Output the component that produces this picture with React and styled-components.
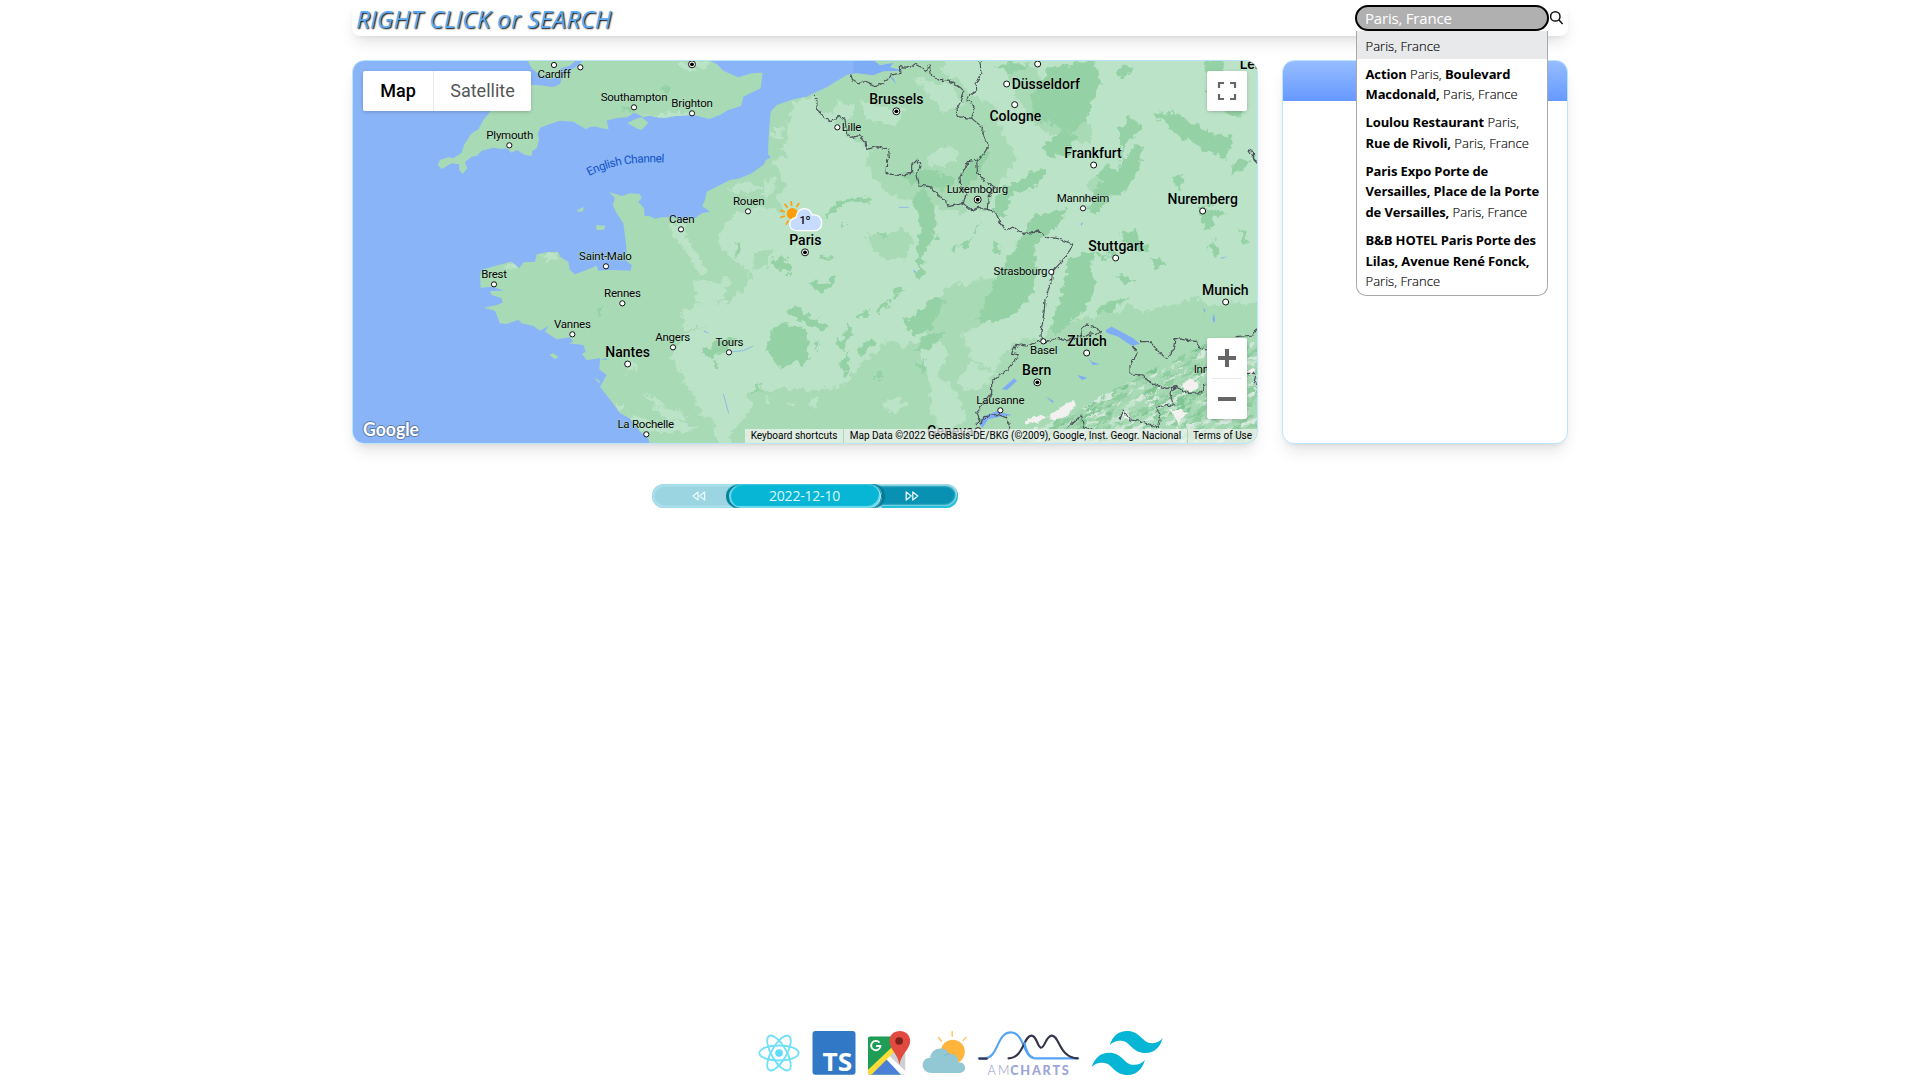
import React from 'react';
import styled, { createGlobalStyle, css } from 'styled-components';

const GlobalStyle = createGlobalStyle`
  *, *::before, *::after { box-sizing: border-box; }
  body { margin: 0; background: #fff; font-family: 'Open Sans', 'Noto Sans', sans-serif; }
`;

/* ---------- layout ---------- */

const Page = styled.div`
  min-height: 100vh;
  display: flex;
  flex-direction: column;
  align-items: center;
  overflow: hidden;
`;

const Header = styled.header`
  width: 1216px;
  height: 36px;
  display: flex;
  align-items: flex-start;
  justify-content: space-between;
  padding: 0 4px 0 4px;
  border-radius: 0 0 8px 8px;
  background: #fff;
  box-shadow: 0 10px 15px -3px rgba(0, 0, 0, 0.1), 0 4px 6px -4px rgba(0, 0, 0, 0.1);
`;

const Title = styled.h1`
  margin: 0;
  font-size: 24.5px;
  line-height: 38px;
  font-weight: 400;
  font-style: italic;
  letter-spacing: 0.1px;
  white-space: nowrap;
  color: #5aa9f5;
  text-shadow: 1px 1px 1.5px #000;
`;

const Search = styled.div`
  position: relative;
  z-index: 5;
  display: flex;
  align-items: flex-start;
  padding-top: 5px;
`;

const Field = styled.input`
  width: 194px;
  height: 26px;
  padding: 0 8px;
  border: 2px solid #000;
  border-radius: 13px;
  outline: none;
  background: #b0b0b0;
  color: #fff;
  font-family: inherit;
  font-size: 15px;
  letter-spacing: -0.2px;
`;

const SearchIcon = styled.svg`
  width: 15px;
  height: 15px;
  margin-top: 5px;
`;

const Suggestions = styled.ul`
  position: absolute;
  top: 31px;
  left: 1px;
  width: 192px;
  margin: 0;
  padding: 0 0 1px;
  list-style: none;
  overflow: hidden;
  background: #fff;
  border: 1px solid #aaa;
  border-top: 0;
  border-radius: 0 0 10px 10px;
`;

const Suggestion = styled.li`
  padding: 4.75px 0 2.25px 8.5px;
  font-size: 13px;
  font-weight: 300;
  line-height: 20.75px;
  letter-spacing: 0.03px;
  white-space: nowrap;
  color: #000;
  -webkit-text-stroke: 0.15px #000;
  background: ${(p) => (p.$active ? '#e8e9eb' : 'transparent')};
`;

const Strong = styled.b`
  font-weight: 700;
  letter-spacing: -0.12px;
  -webkit-text-stroke: 0;
`;

const Columns = styled.main`
  width: 1216px;
  display: flex;
  gap: 24px;
  margin-top: 24px;
`;

const cardShadow = css`
  box-shadow: 0 10px 15px -3px rgba(0, 0, 0, 0.1), 0 4px 6px -4px rgba(0, 0, 0, 0.1);
`;

const MapCard = styled.section`
  position: relative;
  width: 906px;
  height: 384px;
  border: 1px solid #bae6fd;
  border-radius: 12px;
  overflow: hidden;
  font-family: Roboto, sans-serif;
  ${cardShadow}
`;

const MapDrawing = styled.svg`
  display: block;
  width: 100%;
  height: 100%;
`;

const Label = styled.text`
  font-family: Roboto, sans-serif;
  font-size: ${(p) => (p.$big ? 42 : 34.5)}px;
  font-weight: ${(p) => (p.$big ? 500 : 400)};
  letter-spacing: ${(p) => (p.$big ? 0 : -0.7)}px;
  fill: #000;
  stroke: #c5ead0;
  stroke-width: 2px;
  paint-order: stroke;
`;

const SeaLabel = styled.text`
  font-family: Roboto, sans-serif;
  font-size: 35px;
  fill: #1152c5;
`;

const MapTypes = styled.div`
  position: absolute;
  top: 10px;
  left: 10px;
  display: flex;
  height: 40px;
  background: #fff;
  border-radius: 2px;
  box-shadow: 0 1px 4px -1px rgba(0, 0, 0, 0.3);
`;

const MapType = styled.button`
  width: ${(p) => p.$width}px;
  padding: 0 0 1px;
  border: 0;
  background: none;
  font-family: inherit;
  font-size: 18px;
  font-weight: ${(p) => (p.$active ? 500 : 400)};
  color: ${(p) => (p.$active ? '#000' : '#565656')};
  & + & { border-left: 1px solid #e9e9e9; }
`;

const Control = styled.div`
  position: absolute;
  right: 10px;
  ${(p) => (p.$top ? 'top: 10px;' : 'bottom: 24px;')}
  width: 40px;
  height: ${(p) => (p.$top ? 40 : 81)}px;
  background: #fff;
  border-radius: 2px;
  box-shadow: 0 1px 4px -1px rgba(0, 0, 0, 0.3);
`;

const ControlIcon = styled.svg`
  display: block;
  width: 100%;
  height: 100%;
`;

const GoogleMark = styled.svg`
  position: absolute;
  left: 8px;
  bottom: 0;
  width: 64px;
  height: 26px;
`;

const Legal = styled.div`
  position: absolute;
  right: 0;
  bottom: 0;
  display: flex;
  height: 14px;
`;

const LegalItem = styled.span`
  width: ${(p) => p.$width}px;
  text-align: center;
  font-size: 10px;
  line-height: 14px;
  white-space: nowrap;
  color: #000;
  background: rgba(245, 245, 245, 0.7);
  & + & { border-left: 1px solid #a8dab5; }
`;

const SidePanel = styled.aside`
  width: 286px;
  height: 384px;
  border: 1px solid #bae6fd;
  border-radius: 12px;
  overflow: hidden;
  background: #fff;
  ${cardShadow}
`;

const SidePanelHead = styled.div`
  height: 40px;
  background: linear-gradient(#96bdff, #6699ff);
`;

/* ---------- date switch ---------- */

const DateRow = styled.div`
  width: 1216px;
  display: flex;
  margin-top: 40px;
`;

const DateColumn = styled.div`
  width: 906px;
  display: flex;
  justify-content: center;
`;

const DateBar = styled.div`
  display: flex;
  width: 306px;
  height: 24px;
  border-radius: 12px;
  overflow: hidden;
  background: linear-gradient(90deg, #9bd5e2 0 150px, #0891b2 150px);
  box-shadow: inset 0 0 0 1px #9fdde9, inset 0 0 2px 2px #b4e4ed;
`;

const Step = styled.button`
  position: relative;
  display: flex;
  align-items: center;
  width: ${(p) => (p.$next ? 76 : 74)}px;
  height: 24px;
  padding: 0 0 0 ${(p) => (p.$next ? 22.5 : 40)}px;
  border: 0;
  border-radius: ${(p) => (p.$next ? '0 12px 12px 0' : '12px 0 0 12px')};
  background: none;
  ${(p) => p.$next && 'box-shadow: inset -1px -2px 0 #22c0da, inset -2px -3px 2px #8bdcea;'}
`;

const StepIcon = styled.svg`
  width: 14px;
  height: 10px;
`;

const Current = styled.div`
  width: 156px;
  height: 24px;
  border-radius: 12px;
  background: #06b6d4;
  border-top: 1px solid #3cc5dc;
  box-shadow: inset 3px 0 0 #0a7f99, inset -1px 0 0 #0e7f9a, inset -2px 0 0 #a9ecf6,
    inset 5px 0 1px #74dcec, inset -3px -2px 1px #74dcec, 3px 0 1px #0b7792;
  color: #dff7fb;
  font-size: 14px;
  line-height: 22px;
  letter-spacing: -0.2px;
  padding-left: 1px;
  text-align: center;
`;

/* ---------- footer ---------- */

const Footer = styled.footer`
  display: flex;
  gap: 12px;
  margin-top: auto;
  padding: 0 0 5px 0;
`;

const Logo = styled.svg`
  width: ${(p) => p.$width}px;
  height: 44px;
  overflow: visible;
`;

const LogoText = styled.text`
  font-family: ${(p) => p.$font || 'Lato, sans-serif'};
  font-weight: ${(p) => p.$weight || 700};
`;

/* ---------- map data (three units per pixel) ---------- */

const BRITAIN =
  'M1105 180 L1130 192 1150 212 1195 232 1235 220 1268 218 1262 265 1240 275 1210 290 1203 318 1165 330 1140 345 1108 357 1060 345 1010 348 965 355 930 347 910 352 892 342 882 338 862 352 830 354 800 362 806 388 785 385 770 380 750 380 738 388 700 365 660 362 630 372 600 383 594 400 597 420 590 445 577 452 575 468 555 465 530 450 515 458 500 445 485 447 460 443 425 452 410 468 395 470 375 487 382 505 368 522 358 510 357 493 335 490 305 507 293 495 300 480 325 472 340 475 365 458 372 435 395 400 415 388 430 360 450 335 470 300 573 290 573 255 600 256 640 261 660 252 668 225 690 212 712 198 730 180 Z';
const WALES = 'M562 180 L575 205 600 225 630 238 655 230 662 205 690 197 708 180 Z';
const WIGHT = 'M862 370 L885 358 905 352 925 368 905 390 890 385 Z';
const CONTINENT =
  'M2760 170 L1540 170 1555 200 1590 214 1535 222 1520 225 1460 262 1420 280 1400 290 1360 298 1310 315 1292 335 1288 380 1285 430 1284 462 1292 472 1278 480 1270 495 1235 520 1200 535 1170 540 1130 560 1100 575 1095 600 1086 618 1110 635 1085 640 1065 655 1024 665 1000 652 965 652 945 656 928 648 914 648 912 625 895 605 905 595 900 582 870 580 845 588 808 576 825 595 818 615 830 640 850 670 858 730 860 755 850 770 862 785 875 795 872 812 820 810 800 810 775 812 770 797 745 808 705 823 690 810 685 785 660 770 655 755 620 757 590 763 585 785 550 787 538 805 515 785 475 795 425 810 420 825 422 863 460 860 490 872 450 873 455 885 485 895 488 908 470 915 432 923 465 932 480 970 500 972 535 960 545 970 580 978 600 992 625 978 615 995 650 1018 690 1012 700 1025 685 1030 730 1035 737 1055 726 1062 740 1080 780 1075 778 1108 800 1125 780 1160 815 1205 840 1240 870 1255 900 1295 925 1315 930 1340 2760 1340 Z';
const LIGHTLAND =
  'M1365 305 L1425 290 1440 330 1480 345 1520 400 1560 430 1600 445 1575 490 1610 550 1660 590 1720 600 1800 620 1870 645 1885 580 1950 500 1960 440 1930 390 1970 350 1900 290 1850 240 1800 210 1830 170 2770 170 2770 990 2700 900 2600 925 2510 910 2430 930 2380 960 2300 930 2230 985 2130 980 2130 1020 2060 1010 2000 1050 1960 1110 1900 1080 1860 1000 1900 900 1850 840 1790 900 1750 960 1760 1010 1690 1040 1640 1020 1580 1080 1530 1130 1520 1155 1400 1170 1260 1165 1220 1180 1240 1220 1180 1290 1170 1340 1130 1340 1120 1260 1080 1240 1070 1200 1030 1140 1010 1090 990 1070 1040 1000 1100 980 1130 920 1200 880 1240 830 1180 780 1130 720 1150 680 1190 640 1260 620 1335 640 1310 590 1340 560 1320 520 1300 480 1350 460 1340 390 Z';
const LIGHTS = [
  'M1300 385 l30 0 -10 30 -22 -5z', 'M1345 360 l50 15 -10 25 40 20 -30 15 -40 -30z', 'M1330 430 l80 30 -40 15 -50 -20z',
  'M1270 545 l40 -15 -5 30 -20 40 -20 -20z', 'M1160 570 l50 -25 60 20 -50 15z', 'M985 670 l40 0 30 70 50 80 -30 0 -40 -70 -40 -50z',
  'M1060 840 l70 10 40 -20 -20 70 -80 10z', 'M1020 940 l80 -40 100 30 -40 40 -120 20z', 'M910 1180 l40 10 25 30 -30 -5z', 'M930 1215 l80 15 40 25 -60 5z',
  'M820 1210 l30 10 -10 20z', 'M840 1255 l60 -5 50 20 80 -10 40 30 -50 5 -60 5 -60 -20z', 'M600 765 l50 -8 8 18 -40 5z', 'M490 795 l44 -12 2 25 -20 5z', 'M850 1090 l30 -10 20 40 -20 -20 -20 20z',
  'M1560 300 l60 20 80 0 -30 60 -90 -20z', 'M1490 300 l60 20 -20 40 -50 -10z', 'M1720 230 l120 30 30 60 -60 20 -50 -60z', 'M1010 195 l80 -10 30 10 -70 15z', 'M900 345 l170 -10 0 10 -100 10z',
  'M1760 470 l50 -30 50 10 -20 40 -60 10z', 'M1620 1210 l60 -20 20 30 -50 20z', 'M1270 1190 l30 10 -15 20z M1410 1190 l20 10 -10 30z M1330 1205 l40 0 -10 15z',
  'M1740 1060 l60 -40 30 40 -40 60 60 60 30 80 -70 40 -40 -60 0 -100z', 'M1890 1090 l80 30 -60 60 -60 -30z',
];
const DARKS = [
  'M1278 1030 l40 -62 60 12 28 20 0 70 -12 30 -20 -14 -52 14 -38 -40z', 'M1335 930 l40 -12 30 30 60 30 -10 15 -60 -20z', 'M1300 775 l25 -10 28 30 0 30 -20 -10 -30 -20z',
  'M1395 845 l70 0 15 -22 10 10 -40 50z', 'M1440 770 h40 l-10 12 -25 -2z', 'M1455 650 l30 -40 60 -20 50 5 -10 20 -50 -10 -30 15 -30 20 -10 22z', 'M1185 735 l10 -10 8 20 -15 22z',
  'M1085 1065 l40 -40 60 -15 -20 40 -50 20z', 'M1120 1085 l20 5 -10 12z', 'M1555 945 l40 -18 -8 15 -30 10z', 'M1605 930 l40 -30 10 10 -40 30z', 'M1655 870 l30 -10 10 12 -30 12z',
  'M1610 700 l30 0 10 10 -30 5z', 'M1500 660 l15 10 -10 18z', 'M1700 985 l50 -60 50 0 -20 55 -60 30z', 'M1730 1050 l30 -50 60 0 -60 50z', 'M1550 1050 l40 -35 20 10 -50 45z',
  'M1510 1010 l18 -40 10 20 -30 60 -20 -10z', 'M1500 1100 l25 -50 5 50 -10 30z', 'M1600 1140 l20 -30 10 30z', 'M1730 1100 l30 -30 -10 50z',
  'M1750 560 l40 70 -10 80 -40 60 -20 -10 25 -70 -30 -90z', 'M1725 780 l20 -10 10 20 -20 10z', 'M1725 820 l10 -30 20 30 -20 20z', 'M1230 1175 l25 -18 20 20z', 'M770 930 l15 -10 0 15 -12 10z',
  'M960 270 l20 -18 15 15 -10 20z', 'M835 325 l60 -8 -20 25z', 'M1680 520 l90 -10 80 30 -30 30 -90 -10z', 'M1860 540 l50 -70 40 -20 -30 70 -50 60z',
  'M2080 265 l50 -60 130 -25 20 60 -40 120 -50 40 -60 -30 -60 -20z', 'M1960 200 l60 -20 50 20 -50 20z', 'M2110 440 l60 -50 40 20 -30 60 -60 -5z', 'M1990 560 l50 -15 60 -45 20 15 -40 50 -60 15 -50 50z', 'M1970 590 l50 -10 -30 70 -30 -10z',
  'M2340 380 l30 -30 40 30 -60 60 -10 50z', 'M2350 480 l40 -50 20 10 -10 50 -35 80 -40 20 -20 -30z', 'M2270 520 l30 -30 20 20 -30 40z',
  'M2440 340 l60 0 120 60 60 10 -20 70 -80 -40 -60 -30z', 'M2590 180 h60 l10 60 -20 40 -30 -30z', 'M2600 270 l30 0 0 40 -20 10z', 'M2330 210 l30 -20 20 20 -40 30z',
  'M2500 530 l30 -5 0 30 -20 15z', 'M2570 620 l50 0 40 20 -50 20 10 20 -20 10 -20 -40z', 'M2340 700 l40 -10 20 40 40 5 -30 20 -40 -10z', 'M2300 750 l30 5 -5 15 -20 0z', 'M2330 820 l40 10 10 15 -30 10z',
  'M2420 775 l40 -5 20 20 -30 10z', 'M2600 740 l20 -20 20 30 -10 20z', 'M2700 690 l20 10 0 30 -10 -10z', 'M2265 930 l60 -30 40 -5 -40 30 -50 20z', 'M2270 560 l40 -50 30 0 -20 70 -50 60 -30 0z', 'M2270 760 l30 0 0 30z',
  'M2190 770 l80 -20 -20 60 20 40 -20 60 -40 40 -60 50 -20 -10 30 -100z', 'M2080 650 l100 -30 -20 50 -80 70 10 60 -10 80 -50 60 -80 30 -40 -10 40 -90 30 -60z', 'M1960 720 l30 40 -30 5z M1900 700 l20 -40 -10 40z M1860 740 l40 -30 -20 40z M1830 750 l20 -20 0 30z',
  'M1690 960 l60 -30 30 -40 40 10 -50 60 -50 30z', 'M1650 900 l10 -20 20 10z', 'M1620 940 l-10 10z', 'M1780 720 l15 -20 5 20z', 'M2700 470 l30 20 -60 40 0 -20z', 'M2630 300 l60 20 20 30 -50 -10z', 'M1420 1030 l20 -10 -10 30z',
];
const MEDIUMS = [
  'M1380 300 l60 -10 40 40 80 80 60 20 60 60 100 60 80 20 20 50 60 10 20 -60 40 -50 30 -40 -20 -40 -30 -60 -20 -70 -60 -20 -60 -60 -50 -20 -200 10 -50 40z',
  'M1990 200 l80 -10 30 50 80 60 80 80 -10 50 -90 0 -60 -50 -40 -20 -30 -80z', 'M1850 880 l60 -40 60 -10 40 40 -40 40 -40 60 -80 40 -30 0 -20 -60z', 'M2140 980 l100 -30 90 10 30 -50 50 30 80 -10 70 -40 70 30 130 -10 0 90 -300 150 -400 50 -30 -100z',
  'M2240 560 l40 -50 50 20 20 50 -60 20z', 'M1580 700 l40 10 60 -30 40 40 -20 50 -60 10 -50 -40z', 'M1240 760 l60 -20 -20 60 -40 10z',
];
const BORDERS = [
  'M1420 280 L1430 300 1432 330 1450 348 1472 365 1480 360 1498 347 1515 358 1520 400 1535 412 1558 407 1575 425 1580 448 1612 440 1645 447 1648 470 1640 490 1638 520 1680 527 1715 520 1715 495 1732 480 1742 495 1730 520 1738 555 1770 560 1795 585 1820 605 1825 620 1870 610 1880 620 1895 632 1915 622 1942 628 1965 635 1980 665 1998 693 2020 680 2045 700 2080 698 2092 690 2120 712 2150 715 2198 732 2190 750 2160 790 2137 815 2135 840 2125 870 2115 900 2112 940 2102 1000 2105 1022',
  'M1532 220 L1538 242 1555 248 1575 242 1605 257 1630 250 1652 225 1680 220 1678 200 1710 202 1725 192 1760 212 1768 195 1775 228 1800 242 1825 240 1860 262 1872 272 1865 300 1848 330 1852 350 1895 355 1905 325 1890 305 1878 300 M1920 183 L1923 220 1908 248 1910 270 1878 295',
  'M1895 355 L1925 380 1932 412 1945 440 1925 470 1910 480 1885 485 1860 530 1862 560 1878 580 1870 610 M1910 480 L1912 515 1930 540 1965 562 1945 590 1942 628',
  'M2760 503 L2725 450 2740 455 2742 480 2752 490', 'M2105 1022 L2060 1038 2028 1033 2015 1060 2038 1065 2000 1110 1955 1145 1955 1180 1910 1235 1920 1260 1905 1275',
  'M2109 1028 L2150 1015 2180 1022 2225 1010 2222 988 2240 975 2258 978 2285 995 2268 1004 2250 998 2230 1010', 'M2380 1035 L2392 1060 2370 1095 2370 1122 2410 1125 2430 1150 2480 1165 2510 1160 2545 1180 2585 1178 2595 1150',
  'M2400 1025 L2430 1025 2460 1060 2480 1075 2500 1050 2505 1015 2570 1025 2580 1045 2602 1050 M2690 1010 L2740 1005 2752 985 M2720 1120 l25 0 -5 25 25 20',
  'M1920 1270 L1935 1250 1970 1243 2000 1252 2010 1280 2000 1300 M2180 1285 L2225 1245 2230 1280 2260 1290 M2340 1260 L2350 1230 2370 1260 2410 1265 2455 1285 2460 1260 2450 1220 2500 1215 2490 1180 2505 1160',
];
const WATERS = [
  'M2297 990 l18 -10 65 35 20 17 -25 5 -40 -27 -35 -12z', 'M1918 1272 l12 -22 40 -17 45 12 -35 5 -35 8 -18 26z', 'M1985 1168 l38 -33 8 8 -30 27z', 'M2242 1068 l13 17 25 8 -22 2z', 'M2212 1125 l30 8 -15 8z', 'M2118 1190 l24 14 -5 4z', 'M2617 960 l5 -20 3 20 -2 10z', 'M2590 925 l6 5 -3 10z',
  'M1540 180 h60 l20 16 40 -8 -10 14 40 10 -60 2 -30 12 -60 -8z', 'M1645 225 l15 10 10 20 -12 -15z', 'M2222 672 l8 -6 -6 12z', 'M1720 810 l8 4 -4 5z', 'M780 1078 l20 -3 0 4z M1090 990 l20 12 -16 -6z', 'M2640 774 l25 -5 -20 7z',
];

// Small deterministic generator for the ridges of the Alps.
const ridges = (() => {
  let seed = 17;
  const next = () => {
    seed = (seed * 16807) % 2147483647;
    return seed / 2147483647;
  };
  const tones = ['#8fcd9f', '#8fcd9f', '#c3e4cd', '#a3d6b0', '#d5e9dc', '#7fc493'];
  const out = [];
  while (out.length < 560) {
    const x = 1990 + next() * 760;
    const y = 1040 + next() * 290;
    if (y < 1350 - (x - 1960) * 0.5 || (x < 2200 && y < 1200)) continue;
    const l = 14 + next() * 42;
    const a = 4 + next() * 10;
    out.push({ d: `M${x.toFixed(0)} ${y.toFixed(0)} l${l.toFixed(0)} ${(-l * 0.6).toFixed(0)} l${(-l * 0.2).toFixed(0)} ${(l * 0.25 + a).toFixed(0)}z`, fill: tones[Math.floor(next() * tones.length)] });
  }
  return out;
})();

const SNOW = ['M2125 1250 l40 -30 35 -20 8 15 -25 35 -50 10z', 'M2055 1262 l45 -18 20 8 -30 16 -30 4z', 'M2520 1160 l30 -25 25 10 0 20 -25 12z', 'M2490 1230 l35 0 15 10 -25 28z', 'M2345 1230 l20 10 10 22 -20 -5z', 'M2720 1115 l20 -12 5 18 -15 4z'];

// [name, label x, label baseline, anchor, dot x, dot y, kind]
const PLACES = [
  ['Cardiff', 641, 234, 'middle', 641, 194, 's'], ['', 0, 0, 'middle', 720, 201, 's'], ['', 0, 0, 'middle', 1055, 192, 'c'],
  ['Southampton', 881, 303, 'middle', 881, 321, 's'], ['Brighton', 1055, 321, 'middle', 1055, 339, 's'], ['Plymouth', 508, 417, 'middle', 507, 435, 's'],
  ['Rouen', 1225, 615, 'middle', 1223, 633, 's'], ['Caen', 1024, 669, 'middle', 1022, 687, 's'], ['Saint-Malo', 795, 779, 'middle', 797, 798, 's'],
  ['Brest', 461, 834, 'middle', 461, 852, 's'], ['Rennes', 846, 891, 'middle', 846, 909, 's'], ['Vannes', 696, 984, 'middle', 696, 1002, 's'],
  ['Angers', 997, 1023, 'middle', 998, 1041, 's'], ['Tours', 1167, 1038, 'middle', 1166, 1056, 's'], ['Nantes', 862, 1072, 'middle', 862, 1091, 'b'],
  ['La Rochelle', 916, 1284, 'middle', 918, 1302, 's'], ['Paris', 1395, 736, 'middle', 1394, 756, 'C'],
  ['Düsseldorf', 2014, 268, 'start', 1999, 251, 'b'], ['', 0, 0, 'middle', 2092, 191, 'b'], ['Cologne', 2025, 364, 'middle', 2023, 313, 'b'],
  ['Brussels', 1668, 313, 'middle', 1668, 333, 'C'], ['Lille', 1504, 393, 'start', 1491, 381, 's'], ['Luxembourg', 1911, 579, 'middle', 1912, 598, 'c'],
  ['Frankfurt', 2258, 475, 'middle', 2260, 494, 'b'], ['Mannheim', 2228, 606, 'middle', 2228, 624, 's'], ['Nuremberg', 2587, 613, 'middle', 2587, 632, 'b'],
  ['Strasbourg', 2121, 825, 'end', 2133, 815, 's'], ['Stuttgart', 2327, 754, 'middle', 2326, 773, 'b'], ['Lei', 2698, 207, 'start', 0, 0, 'B'],
  ['Munich', 2655, 886, 'middle', 2656, 905, 'b'], ['Zürich', 2240, 1039, 'middle', 2239, 1058, 'b'], ['Basel', 2110, 1062, 'middle', 2109, 1023, 's'],
  ['Bern', 2089, 1125, 'middle', 2091, 1146, 'C'], ['Lausanne', 1980, 1212, 'middle', 1980, 1230, 's'], ['Geneva', 1760, 1308, 'start', 1913, 1291, 'b'], ['Inn', 2560, 1119, 'start', 0, 0, 'n'],
];

function Place({ data }) {
  const [name, x, y, anchor, dx, dy, kind] = data;
  const big = 'bBC'.includes(kind);
  const capital = 'cC'.includes(kind);
  return (
    <g>
      {dx > 0 && <circle cx={dx + 1} cy={dy + 1} r={capital ? 10.5 : big ? 9 : 7.8} fill="#fff" stroke="#111" strokeWidth="3" />}
      {capital && <circle cx={dx + 1} cy={dy + 1} r="5.8" fill="#000" />}
      {name && <Label x={x + 1} y={y} textAnchor={anchor} $big={big}>{name}</Label>}
    </g>
  );
}

function Marker() {
  const rays = [-165, -128, -95, -58, 120, 162];
  return (
    <g>
      <g stroke="#ff9e0b" strokeWidth="5">
        {rays.map((deg) => {
          const r = (deg * Math.PI) / 180;
          return <line key={deg} x1={1357 + 23 * Math.cos(r)} y1={641 + 23 * Math.sin(r)} x2={1357 + 38 * Math.cos(r)} y2={641 + 38 * Math.sin(r)} />;
        })}
      </g>
      <circle cx="1357" cy="641" r="17" fill="#ff9e0b" />
      <path d="M1372 692 C1342 692 1342 656 1368 653 C1370 634 1382 625 1395 626 C1410 628 1414 638 1416 645 C1434 642 1445 653 1445 668 C1445 684 1436 692 1420 692 Z" fill="#c6dbfd" stroke="#fff" strokeWidth="4" />
      <Label x="1395" y="673" textAnchor="middle" style={{ fontSize: 33, fontWeight: 500, stroke: 'none' }}>1º</Label>
    </g>
  );
}

function WeatherMap() {
  return (
    <MapDrawing viewBox="39 183 2712 1146" preserveAspectRatio="none">
      <defs>
        <filter id="rough" filterUnits="userSpaceOnUse" x="0" y="150" width="2800" height="1220">
          <feTurbulence type="fractalNoise" baseFrequency="0.05" numOctaves="3" seed="4" />
          <feDisplacementMap in="SourceGraphic" scale="34" xChannelSelector="R" yChannelSelector="G" />
        </filter>
        <filter id="jag" filterUnits="userSpaceOnUse" x="0" y="150" width="2800" height="1220">
          <feTurbulence type="fractalNoise" baseFrequency="0.08" numOctaves="2" seed="9" />
          <feDisplacementMap in="SourceGraphic" scale="13" xChannelSelector="R" yChannelSelector="G" />
        </filter>
        <clipPath id="land"><path d={CONTINENT} /><path d={BRITAIN} /></clipPath>
        <path id="channel" d="M747 528 Q838 480 975 488" />
      </defs>
      <rect x="0" y="150" width="2800" height="1220" fill="#89b4f8" />
      <g fill="#a8dab5">
        <path d={BRITAIN} /><path d={WALES} /><path d={WIGHT} /><path d={CONTINENT} />
        <path d="M710 632 l12 -7 10 -3 -3 12 -12 2z M768 675 l28 2 -4 12 -22 2z M628 1065 l12 -5 15 10 -10 8z M762 1132 l18 12 -3 6z" />
      </g>
      <g clipPath="url(#land)">
        <g filter="url(#rough)">
          <path d={LIGHTLAND} fill="#bbe3c8" />
          {MEDIUMS.map((d) => <path key={d} d={d} fill="#a8dab5" />)}
          {LIGHTS.map((d) => <path key={d} d={d} fill="#bbe3c8" />)}
          {DARKS.map((d) => <path key={d} d={d} fill="#94d2a5" />)}
        </g>
        <g filter="url(#jag)">
          {ridges.map((r, i) => <path key={i} d={r.d} fill={r.fill} />)}
          {SNOW.map((d) => <path key={d} d={d} fill="#f3f1ef" />)}
        </g>
      </g>
      {WATERS.map((d) => <path key={d} d={d} fill="#7fadf5" />)}
      <path d="M1170 1056 l40 -4 30 -14 M1150 1182 l16 58 M1676 622 h30" stroke="#86b3ea" strokeWidth="2.5" fill="none" />
      <g filter="url(#jag)" fill="none" stroke="#4b4f59" strokeWidth="3.4" strokeLinejoin="round">
        {BORDERS.map((d) => <path key={d} d={d} />)}
      </g>
      <SeaLabel><textPath href="#channel" textLength="232" lengthAdjust="spacing">English Channel</textPath></SeaLabel>
      {PLACES.map((p, i) => <Place key={i} data={p} />)}
      <Marker />
    </MapDrawing>
  );
}

function Arrows({ flip }) {
  return (
    <StepIcon viewBox="0 0 14 10" fill="none" stroke="#e6f8fb" strokeWidth="1.3" strokeLinejoin="round">
      {flip ? <path d="M6 1v8L1 5z M12.6 1v8L7.6 5z" /> : <path d="M1.2 1v8l5-4z M7.8 1v8l5-4z" />}
    </StepIcon>
  );
}

function Logos() {
  return (
    <Footer>
      <Logo $width={43} viewBox="52 63 129 132">
        <g fill="none" stroke="#70e0f8" strokeWidth="5.5">
          {[0, 60, 120].map((a) => <ellipse key={a} cx="115" cy="129" rx="59" ry="22.5" transform={`rotate(${a} 115 129)`} />)}
        </g>
        <circle cx="115" cy="129" r="11.5" fill="#61dafb" />
      </Logo>
      <Logo $width={43} viewBox="217.5 63 129 132">
        <rect x="216" y="63" width="129" height="131" rx="9" fill="#3178c6" />
        <LogoText x="246" y="184" fontSize="77" fill="#fff" textLength="89" lengthAdjust="spacingAndGlyphs" $font="'Open Sans', sans-serif">TS</LogoText>
      </Logo>
      <Logo $width={43} viewBox="383.5 63 129 132">
        <clipPath id="tile"><rect x="383" y="79" width="112" height="115" rx="8" /></clipPath>
        <g clipPath="url(#tile)">
          <rect x="383" y="79" width="112" height="115" fill="#1f9d55" />
          <path d="M383 194 L439 139 495 194Z" fill="#4b80d6" />
          <path d="M439 139 L460 118 500 118 500 200Z" fill="#cfcfd1" />
          <path d="M430 139 L440 130 500 188 500 200 488 200Z" fill="#fff" />
          <path d="M383 180 L455 112 464 124 390 198 380 198Z" fill="#fbdc37" />
        </g>
        <path d="M478 165 C474 130 448 120 448 92 C448 75 461 63 479 63 C497 63 510 76 510 92 C510 120 482 130 478 165Z" fill="#e04a3f" />
        <circle cx="477" cy="93" r="11.5" fill="#7c211b" />
        <path d="M418 98 A14 14 0 1 0 421 108 H408" fill="none" stroke="#fff" strokeWidth="5.5" />
      </Logo>
      <Logo $width={43} viewBox="546.5 63 129 132">
        <circle cx="636" cy="125" r="36" fill="#ffb43c" />
        <path d="M634 65 V79 M593 82 L602 93 M675 82 L667 92" stroke="#ffbd55" strokeWidth="4" strokeLinecap="round" />
        <path d="M572 189 C537 187 538 143 568 143 C571 110 617 107 625 133 C643 129 654 143 651 157 C678 154 680 187 657 189Z" fill="#92c7d4" />
        <path d="M610 137 Q617 129 628 133" stroke="#7db5c4" strokeWidth="3" fill="none" />
      </Logo>
      <Logo $width={101} viewBox="713.5 63 303 132">
        <path d="M716 145 H735 C775 142 770 67 812 67 C853 67 848 144 885 145 H1013" fill="none" stroke="#56a5f5" strokeWidth="6.5" strokeLinecap="round" />
        <path d="M718 146 H740 M805 145 C850 145 850 77 874 77 C890 77 892 113 903 113 C914 113 918 77 935 77 C958 77 958 145 1013 145" fill="none" stroke="#33354d" strokeWidth="6.5" strokeLinecap="round" />
        <path d="M852 97 Q862 140 880 144" fill="none" stroke="#56a5f5" strokeWidth="6.5" />
        <LogoText x="742" y="194" fontSize="38" fill="#8f95cf" textLength="66" $weight={300}>AM</LogoText>
        <LogoText x="810" y="194" fontSize="38" fill="#9da5d8" textLength="176" $weight={900}>CHARTS</LogoText>
      </Logo>
      <Logo $width={72} viewBox="1053 63 216 132">
        <path d="M1109 106 C1118 77 1136 63 1161 63 C1200 63 1205 95 1230 99 C1247 101 1259 96 1268 84 C1260 113 1243 129 1217 129 C1178 129 1173 99 1149 93 C1132 90 1120 94 1109 106Z" fill="#06b6d4" />
        <path d="M1055 171 C1064 143 1082 128 1107 128 C1146 128 1151 160 1176 164 C1193 166 1205 161 1215 150 C1206 179 1189 195 1163 195 C1124 195 1119 165 1095 159 C1078 156 1066 160 1055 171Z" fill="#06b6d4" />
      </Logo>
    </Footer>
  );
}

export default function App() {
  return (
    <Page>
      <GlobalStyle />
      <Header>
        <Title>RIGHT CLICK or SEARCH</Title>
        <Search>
          <Field defaultValue="Paris, France" />
          <SearchIcon viewBox="0 0 15 15" fill="none" stroke="#111" strokeWidth="1.5">
            <circle cx="6.3" cy="6.4" r="4.7" /><path d="M9.7 9.8 L13.6 14" />
          </SearchIcon>
          <Suggestions>
            <Suggestion $active>Paris, France</Suggestion>
            <Suggestion><Strong>Action</Strong> Paris, <Strong>Boulevard<br />Macdonald,</Strong> Paris, France</Suggestion>
            <Suggestion><Strong>Loulou Restaurant</Strong> Paris,<br /><Strong>Rue de Rivoli,</Strong> Paris, France</Suggestion>
            <Suggestion><Strong>Paris Expo Porte de<br />Versailles, Place de la Porte<br />de Versailles,</Strong> Paris, France</Suggestion>
            <Suggestion><Strong>B&amp;B HOTEL Paris Porte des<br />Lilas, Avenue René Fonck,</Strong><br />Paris, France</Suggestion>
          </Suggestions>
        </Search>
      </Header>

      <Columns>
        <MapCard>
          <WeatherMap />
          <MapTypes>
            <MapType $active $width={70}>Map</MapType>
            <MapType $width={98}>Satellite</MapType>
          </MapTypes>
          <Control $top>
            <ControlIcon viewBox="0 0 40 40" fill="none" stroke="#666" strokeWidth="2.2">
              <path d="M12 17v-5h5 M23 12h5v5 M28 23v5h-5 M17 28h-5v-5" />
            </ControlIcon>
          </Control>
          <Control>
            <ControlIcon viewBox="0 0 40 81" fill="none" stroke="#666" strokeWidth="4">
              <path d="M11 20h18 M20 11v18 M11 61h18" /><path d="M5 40.5h30" stroke="#e6e6e6" strokeWidth="1" />
            </ControlIcon>
          </Control>
          <GoogleMark viewBox="0 0 64 26">
            <LogoText x="2" y="18.5" fontSize="18.5" fill="#fff" stroke="#5d7cab" strokeWidth="2" paintOrder="stroke" textLength="56" lengthAdjust="spacingAndGlyphs">Google</LogoText>
          </GoogleMark>
          <Legal>
            <LegalItem $width={98}>Keyboard shortcuts</LegalItem>
            <LegalItem $width={344}>Map Data ©2022 GeoBasis-DE/BKG (©2009), Google, Inst. Geogr. Nacional</LegalItem>
            <LegalItem $width={70}>Terms of Use</LegalItem>
          </Legal>
        </MapCard>
        <SidePanel><SidePanelHead /></SidePanel>
      </Columns>

      <DateRow>
        <DateColumn>
          <DateBar>
            <Step aria-label="Previous day"><Arrows flip /></Step>
            <Current>2022-12-10</Current>
            <Step $next aria-label="Next day"><Arrows /></Step>
          </DateBar>
        </DateColumn>
      </DateRow>

      <Logos />
    </Page>
  );
}
